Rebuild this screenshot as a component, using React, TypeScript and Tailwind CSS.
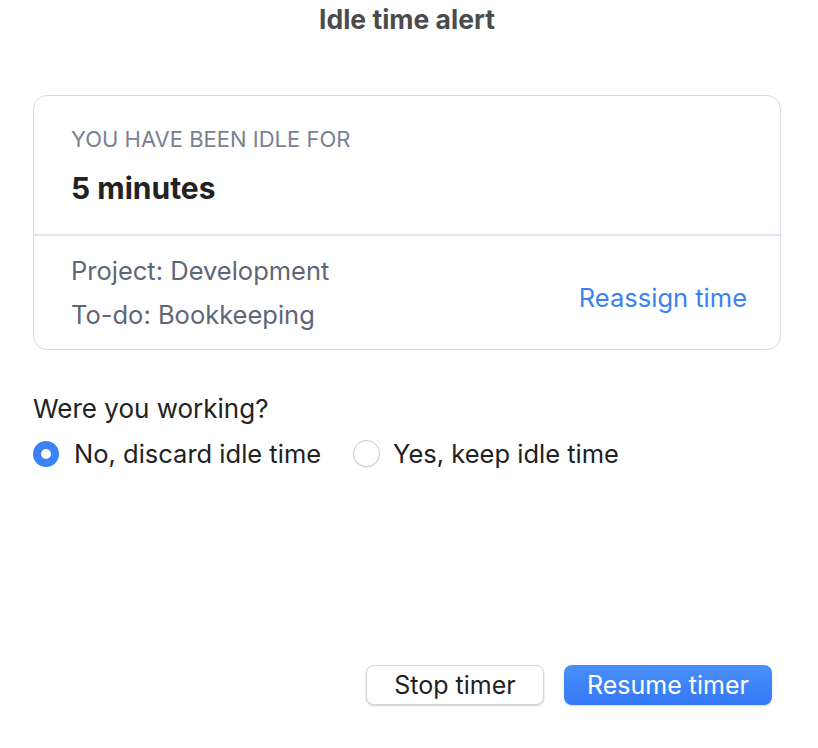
export default function App() {
	return (
		<div className="flex h-[748px] w-[818px] flex-col bg-white pl-[33px] pr-[37px] font-['Inter',sans-serif] text-[#222]">
			{/* Window title */}
			<h1 className="pt-[4px] text-center text-[26.5px] font-bold leading-[30px] text-[#4b4b4b]">
				Idle time alert
			</h1>

			{/* Idle summary card */}
			<div className="mt-[61px] rounded-[14px] border-[1.5px] border-[#d6d9e4]">
				<div className="px-[37px] pb-[28px] pt-[30px]">
					<p className="text-[22px] leading-[26px] text-[#7a8190]">YOU HAVE BEEN IDLE FOR</p>
					<p className="mt-[18px] text-[30px] font-bold leading-[36px] text-[#222]">5 minutes</p>
				</div>
				<div className="h-[1.5px] bg-[#e3e5eb]" />
				<div className="flex items-center justify-between pl-[37px] pr-[33px] pb-[19px] pt-[20px]">
					<div className="flex flex-col gap-[14px] text-[25.5px] leading-[30px] text-[#5f6677]">
						<span>Project: Development</span>
						<span>To-do: Bookkeeping</span>
					</div>
					<button className="mt-[10px] text-[25.5px] leading-[30px] text-[#3b82f0]">Reassign time</button>
				</div>
			</div>

			{/* Working question */}
			<p className="mt-[44px] text-[26px] leading-[30px] text-[#222]">Were you working?</p>
			<div className="mt-[15px] flex items-center gap-[32px] text-[25.5px] leading-[30px]">
				<label className="flex items-center gap-[15px]">
					<span className="flex h-[26px] w-[26px] items-center justify-center rounded-full bg-[#3b82f6]">
						<span className="h-[10px] w-[10px] rounded-full bg-white" />
					</span>
					<span>No, discard idle time</span>
				</label>
				<label className="flex items-center gap-[13px]">
					<span className="h-[27px] w-[27px] rounded-full border border-[#c9c9c9] bg-white shadow-[0_1px_1px_rgba(0,0,0,0.08)]" />
					<span>Yes, keep idle time</span>
				</label>
			</div>

			{/* Actions */}
			<div className="mt-auto mb-[43px] flex justify-end gap-[20px] pr-[9px]">
				<button className="h-[40px] w-[178px] rounded-[8px] border border-[#d6d6d6] bg-white text-[25px] leading-[30px] text-[#222] shadow-[0_1px_2px_rgba(0,0,0,0.2)]">
					Stop timer
				</button>
				<button className="h-[40px] w-[208px] rounded-[8px] bg-gradient-to-b from-[#4a90f7] to-[#3478f6] text-[25px] leading-[30px] text-white shadow-[0_1px_2px_rgba(0,0,0,0.15)]">
					Resume timer
				</button>
			</div>
		</div>
	);
}
